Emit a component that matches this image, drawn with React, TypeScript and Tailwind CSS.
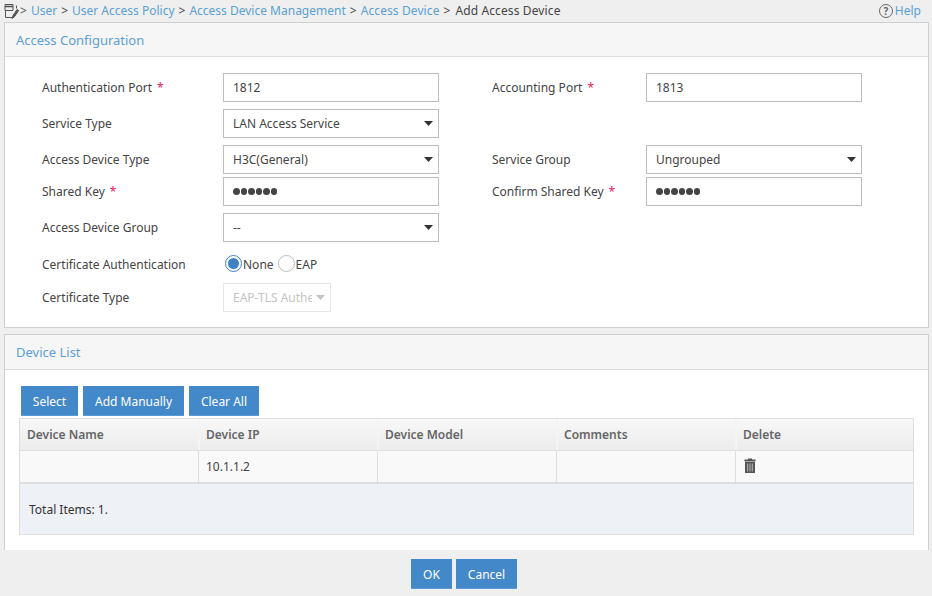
import React from "react";

const FONT = "font-['Noto_Sans',sans-serif]";

function Arrow({ disabled }: { disabled?: boolean }) {
  return (
    <svg width="9" height="5" viewBox="0 0 9 5" className="shrink-0">
      <path d="M0 0H9L4.5 5Z" fill={disabled ? "#c4c4c4" : "#333"} />
    </svg>
  );
}

function Label({ text, req, width }: { text: string; req?: boolean; width: string }) {
  return (
    <div className={`${width} shrink-0 text-[#444]`}>
      {text}
      {req && <span className="ml-[5px] text-[#e4195a]">*</span>}
    </div>
  );
}

function Input({ value }: { value: string }) {
  return (
    <div className="w-[216px] h-[29px] shrink-0 border border-[#bdbdbd] bg-white pl-[9px] flex items-center text-[#444]">
      {value}
    </div>
  );
}

function Dots() {
  return (
    <div className="w-[216px] h-[29px] shrink-0 border border-[#bdbdbd] bg-white pl-[9px] flex items-center gap-[1px] text-[#444]">
      {[0, 1, 2, 3, 4, 5].map((i) => (
        <span key={i} className="w-[6.5px] h-[6.5px] rounded-full bg-[#444]" />
      ))}
    </div>
  );
}

function Select({ value }: { value: string }) {
  return (
    <div className="w-[216px] h-[29px] shrink-0 border border-[#bdbdbd] bg-white pl-[9px] pr-[5px] flex items-center justify-between text-[#444]">
      <span>{value}</span>
      <Arrow />
    </div>
  );
}

function PanelHead({ title, height }: { title: string; height: string }) {
  return (
    <div className={`${height} bg-[#f6f6f6] border-b border-[#dedede] pl-[11px] flex items-center text-[13px] text-[#5b9fd4]`}>
      {title}
    </div>
  );
}

function Btn({ text, width }: { text: string; width: string }) {
  return (
    <div className={`${width} h-[30px] bg-[#4389ca] border-b border-[#5b9bd5] pt-[3px] text-white flex items-center justify-center`}>
      {text}
    </div>
  );
}

function Radio({ on }: { on?: boolean }) {
  return (
    <span className={`w-[17px] h-[17px] rounded-full border bg-white flex items-center justify-center shrink-0 ${on ? "border-[#3f82c4]" : "border-[#bdbdbd]"}`}>
      {on && <span className="w-[11px] h-[11px] rounded-full bg-[#3f82c4]" />}
    </span>
  );
}

const heads = ["Device Name", "Device IP", "Device Model", "Comments", "Delete"];

export default function App() {
  return (
    <div className={`${FONT} w-[932px] h-[596px] overflow-hidden bg-[#efefef] flex flex-col text-[12px] leading-[18px] text-[#444]`}>
      <div className="h-[22px] shrink-0 pl-[4px] pr-[11px] flex items-center justify-between">
        <div className="flex items-center">
          <svg width="16" height="18" viewBox="0 0 16 18" fill="none" stroke="#555" strokeWidth="1" className="shrink-0">
            <path d="M1 2.5H9V8.5H1Z" />
            <path d="M1 4.5H9" strokeWidth="1.6" />
            <path d="M1.5 9V15.5H8" />
            <path d="M8 16.5L9 13.5L13 7.5L14.6 8.6L10.6 14.6Z" fill="#555" />
            <path d="M12.5 3.5V6.5" />
          </svg>
          <span className="mr-[4px] text-[#555]">&gt;</span>
          <span className="text-[#5b9fd4]">User</span>
          <span className="mx-[4px]">&gt;</span>
          <span className="text-[#5b9fd4]">User Access Policy</span>
          <span className="mx-[4px]">&gt;</span>
          <span className="text-[#5b9fd4]">Access Device Management</span>
          <span className="mx-[4px]">&gt;</span>
          <span className="text-[#5b9fd4] tracking-[0.1px]">Access Device</span>
          <span className="ml-[4px] mr-[5px]">&gt;</span>
          <span className="tracking-[0.12px]">Add Access Device</span>
        </div>
        <div className="flex items-center gap-[2px] text-[#5b9fd4]">
          <span className="w-[14px] h-[14px] rounded-full border border-[#666] text-[#666] text-[10px] leading-none font-bold flex items-center justify-center">?</span>
          <span>Help</span>
        </div>
      </div>

      <div className="flex-1 min-h-0 overflow-hidden pl-[4px] pr-[3px]">
        <div className="h-[306px] border border-[#cfcfcf] bg-white">
          <PanelHead title="Access Configuration" height="h-[34px]" />
          <div className="pl-[37px] pt-[16px] flex flex-col">
            <div className="flex items-center">
              <Label width="w-[181px]" text="Authentication Port" req />
              <Input value="1812" />
              <div className="w-[53px] shrink-0" />
              <Label width="w-[154px]" text="Accounting Port" req />
              <Input value="1813" />
            </div>
            <div className="flex items-center mt-[7px]">
              <Label width="w-[181px]" text="Service Type" />
              <Select value="LAN Access Service" />
            </div>
            <div className="flex items-center mt-[7px]">
              <Label width="w-[181px]" text="Access Device Type" />
              <Select value="H3C(General)" />
              <div className="w-[53px] shrink-0" />
              <Label width="w-[154px]" text="Service Group" />
              <Select value="Ungrouped" />
            </div>
            <div className="flex items-center mt-[3px]">
              <Label width="w-[181px]" text="Shared Key" req />
              <Dots />
              <div className="w-[53px] shrink-0" />
              <Label width="w-[154px]" text="Confirm Shared Key" req />
              <Dots />
            </div>
            <div className="flex items-center mt-[7px]">
              <Label width="w-[181px]" text="Access Device Group" />
              <Select value="--" />
            </div>
            <div className="flex items-center mt-[12px] h-[18px]">
              <div className="w-[183px] shrink-0 mt-[3px] text-[#444]">Certificate Authentication</div>
              <Radio on />
              <span className="ml-[1px] mt-[4px]">None</span>
              <span className="w-[4px]" />
              <Radio />
              <span className="ml-[1px] mt-[4px]">EAP</span>
            </div>
            <div className="flex items-center mt-[11px]">
              <Label width="w-[181px]" text="Certificate Type" />
              <div className="w-[108px] h-[29px] border border-[#e6e6e6] pl-[9px] pr-[5px] flex items-center justify-between text-[#c4c4c4]">
                <span className="w-[79px] overflow-hidden whitespace-nowrap">EAP-TLS Authentication</span>
                <Arrow disabled />
              </div>
            </div>
          </div>
        </div>

        <div className="mt-[6px] h-[240px] border border-[#cfcfcf] bg-white">
          <PanelHead title="Device List" height="h-[35px]" />
          <div className="pl-[14px] pr-[14px]">
            <div className="pt-[16px] pl-[2px] flex gap-[5px]">
              <Btn text="Select" width="w-[57px]" />
              <Btn text="Add Manually" width="w-[101px]" />
              <Btn text="Clear All" width="w-[70px]" />
            </div>
            <div className="mt-[2px] w-[895px] border border-[#dedede]">
              <div className="grid grid-cols-[178px_179px_179px_179px_178px] h-[32px] border-b border-[#dedede] bg-gradient-to-b from-[#f8f8f8] to-[#ececec]">
                {heads.map((h, i) => (
                  <div key={h} className={`flex items-center font-semibold text-[#666] ${i ? "border-l-2 border-[#f4f4f4] pl-[6px]" : "pl-[7px]"}`}>
                    {h}
                  </div>
                ))}
              </div>
              <div className="grid grid-cols-[178px_179px_179px_179px_178px] h-[33px] border-b-2 border-[#dedede] bg-[#f9f9f9]">
                <div />
                <div className="pl-[7px] flex items-center border-l border-[#dedede] text-[#444]">10.1.1.2</div>
                <div className="border-l border-[#dedede]" />
                <div className="border-l border-[#dedede]" />
                <div className="pl-[8px] flex items-center border-l border-[#dedede]">
                  <svg width="12" height="15" viewBox="0 0 12 15" className="mb-[2px]">
                    <path d="M4 0.5H8V1.5H11.5V3.5H0.5V1.5H4Z" fill="#555" />
                    <path d="M1 4H11V15H1Z" fill="#555" />
                    <path d="M3 5.5H4.3V13.5H3ZM5.4 5.5H6.6V13.5H5.4ZM7.7 5.5H9V13.5H7.7Z" fill="#a8a8a8" />
                  </svg>
                </div>
              </div>
              <div className="h-[50px] bg-[#eef1f6] pl-[9px] pt-[2px] flex items-center text-[#333]">Total Items: 1.</div>
            </div>
          </div>
        </div>
      </div>

      <div className="h-[46px] shrink-0 bg-[#efefef] pt-[9px] pl-[411px] flex gap-[4px]">
        <Btn text="OK" width="w-[41px]" />
        <Btn text="Cancel" width="w-[61px]" />
      </div>
    </div>
  );
}
